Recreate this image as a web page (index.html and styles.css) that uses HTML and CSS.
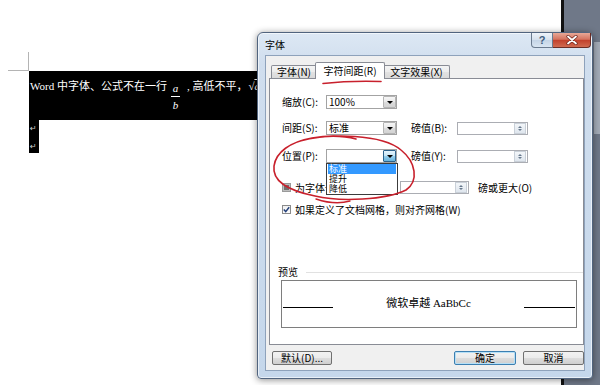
FILE: index.html
```html
<!DOCTYPE html>
<html lang="zh-CN">
<head>
<meta charset="utf-8">
<title>字体</title>
<link rel="stylesheet" href="styles.css">
</head>
<body>
<div class="screen">
  <div class="doc">
    <div class="crop"></div>
    <div class="band">
      <span class="txt">Word 中字体、公式不在一行</span>
      <span class="frac"><i>a</i><span class="bar"></span><i>b</i></span>
      <span class="txt comma">, 高低不平，</span>
      <span class="sqrt">√<i>a</i></span>
    </div>
    <div class="strip">
      <span class="ret">↵</span>
      <span class="ret">↵</span>
    </div>
  </div>
  <div class="edge"></div>
  <div class="desk"><div class="scroll"></div></div>

  <div class="dialog">
    <div class="titlebar">
      <span class="title">字体</span>
      <div class="caption">
        <span class="cbtn help">?</span>
        <span class="cbtn close">
          <svg width="14" height="10" viewBox="0 0 14 10"><path d="M3 1.5 L11 8.5 M11 1.5 L3 8.5" stroke="#6b2018" stroke-width="3.2" stroke-linecap="round"/><path d="M3 1.5 L11 8.5 M11 1.5 L3 8.5" stroke="#fff" stroke-width="1.8" stroke-linecap="round"/></svg>
        </span>
      </div>
    </div>
    <div class="client">
      <div class="tabs">
        <span class="tab t1">字体(N)</span>
        <span class="tab t2">字符间距(R)</span>
        <span class="tab t3">文字效果(X)</span>
      </div>
      <div class="panel">
        <div class="row r1">
          <span class="lbl">缩放(C):</span>
          <span class="combo"><span class="val">100%</span><span class="drop"><i class="tri"></i></span></span>
        </div>
        <div class="row r2">
          <span class="lbl">间距(S):</span>
          <span class="combo"><span class="val">标准</span><span class="drop"><i class="tri"></i></span></span>
          <span class="lbl lbl2">磅值(B):</span>
          <span class="spin"><span class="spinbtn"><i class="up"></i><i class="dn"></i></span></span>
        </div>
        <div class="row r3">
          <span class="lbl">位置(P):</span>
          <span class="combo"><span class="val"></span><span class="drop pressed"><i class="tri"></i></span></span>
          <span class="lbl lbl2">磅值(Y):</span>
          <span class="spin"><span class="spinbtn"><i class="up"></i><i class="dn"></i></span></span>
        </div>
        <div class="row r4">
          <span class="chk mixed"></span>
          <span class="clbl">为字体调整字间距(K):</span>
          <span class="spin short"><span class="spinbtn"><i class="up"></i><i class="dn"></i></span></span>
          <span class="unit">磅或更大(O)</span>
        </div>
        <div class="row r5">
          <span class="chk"><svg width="7" height="7" viewBox="0 0 7 7"><path d="M0.8 3.6 L2.7 5.6 L6.2 1.2" fill="none" stroke="#23407a" stroke-width="1.5"/></svg></span>
          <span class="clbl2">如果定义了文档网格，则对齐网格(W)</span>
        </div>
        <div class="prevhead"><span class="plbl">预览</span><span class="sep"></span></div>
        <div class="preview">
          <span class="pline"></span>
          <span class="ptext">微软卓越 AaBbCc</span>
          <span class="pline pr"></span>
        </div>
        <div class="droplist">
          <div class="item sel">标准</div>
          <div class="item">提升</div>
          <div class="item">降低</div>
        </div>
      </div>
      <div class="buttons">
        <span class="btn b-def">默认(D)...</span>
        <span class="btn b-ok">确定</span>
        <span class="btn b-cancel">取消</span>
      </div>
    </div>
  </div>

  <svg class="marks" width="600" height="385" viewBox="0 0 600 385">
    <path d="M323 83.5 Q350 80.5 381 81.5" fill="none" stroke="#c8202c" stroke-width="1.6" stroke-linecap="round"/>
    <path d="M300 141 C330 133 382 134 401 150 C416 162 419 181 406 190 C386 200 340 202 315 196 C290 191 272 182 274 166 C276 152 290 142 312 138 C330 135 345 136 356 139" fill="none" stroke="#c8202c" stroke-width="1.6" stroke-linecap="round"/>
    <path d="M316 199 C328 203 340 204 350 201" fill="none" stroke="#c8202c" stroke-width="1.4" stroke-linecap="round"/>
  </svg>
</div>
</body>
</html>
```

FILE: styles.css
```css
* { box-sizing: border-box; margin: 0; padding: 0; }
html, body { width: 600px; height: 385px; overflow: hidden; background: #fff; }
body { font-family: "Noto Sans CJK SC", "Liberation Sans", sans-serif; font-size: 10px; color: #000; }

.screen { position: relative; width: 600px; height: 385px; display: flex; overflow: hidden; }

/* document area */
.doc { width: 561px; flex: none; padding-top: 52px; }
.crop { margin-left: 8px; width: 21px; height: 19px; border-right: 1px solid #b4b4b4; border-bottom: 1px solid #b4b4b4; }
.band {
  margin-left: 29px; width: 240px; height: 49px; background: #000; color: #fff;
  display: flex; align-items: flex-start; padding: 8px 0 0 1px;
  font: 11px/14px "Liberation Serif", "Noto Sans CJK SC", serif; white-space: nowrap;
}
.frac { display: flex; flex-direction: column; align-items: center; width: 9px; margin: 3px 7px 0 4px; line-height: 12px; }
.frac i { font-style: italic; }
.bar { width: 9px; height: 1px; background: #fff; margin: 2px 0; }
.sqrt { margin-left: 1px; }
.sqrt i { font-style: italic; text-decoration: overline; }
.strip { margin-left: 29px; width: 10px; height: 33px; background: #000; display: flex; flex-direction: column; overflow: hidden; }
.ret { font: 8px/18px "DejaVu Sans", sans-serif; color: #cfcfcf; padding-left: 1px; }

.edge { width: 3px; flex: none; background: #111; }
.desk { flex: 1; background: #6f7888; display: flex; justify-content: flex-end; }
.scroll { width: 6px; height: 92px; margin-top: 42px; background: #a3abb7; }

/* dialog */
.dialog {
  position: absolute; left: 257px; top: 32px; width: 336px; height: 347px;
  border: 1px solid #51647e; border-radius: 6px 6px 4px 4px;
  background: linear-gradient(180deg, #dde8f4 0, #d0deee 30px, #c5d7eb 100%);
  box-shadow: 0 1px 7px rgba(0, 0, 0, .45), inset 0 0 0 1px rgba(255, 255, 255, .6);
  padding: 0 7px 7px 7px; display: flex; flex-direction: column; z-index: 2;
}
.titlebar { height: 22px; flex: none; display: flex; justify-content: space-between; align-items: flex-start; }
.title { font-size: 10px; line-height: 24px; }
.caption { display: flex; margin-right: -6px; }
.cbtn { height: 15px; display: flex; align-items: center; justify-content: center; }
.help {
  width: 22px; border: 1px solid #6a7a8e; border-top: none; border-radius: 0 0 0 4px;
  background: linear-gradient(#eef3f9, #d5e0ec 50%, #c4d4e6 51%, #d9e5f1);
  color: #3f5d7d; font: bold 11px/13px "Liberation Sans", sans-serif;
}
.close {
  width: 38px; border: 1px solid #6b2c24; border-left: none; border-top: none; border-radius: 0 0 4px 0;
  background: linear-gradient(#e8a897, #d4735f 45%, #c2412c 52%, #d06a50);
}

.client { flex: 1; background: #f0f0f0; border: 1px solid #8ea2bb; padding: 0 0 0 3px; display: flex; flex-direction: column; }

.tabs { display: flex; align-items: flex-end; height: 22px; flex: none; padding-left: 2px; }
.tab {
  height: 13px; border: 1px solid #898c95; border-bottom: none; border-radius: 2px 2px 0 0;
  background: linear-gradient(#f4f4f4, #ececec 50%, #e2e2e2 51%, #dadada);
  text-align: center; line-height: 12px; font-size: 10px; white-space: nowrap;
}
.t1 { width: 46px; }
.t2 { width: 70px; margin-left: -2px; height: 17px; background: #fff; position: relative; z-index: 2; margin-bottom: -1px; line-height: 15px; }
.t3 { width: 67px; margin-left: -2px; }

.panel { position: relative; z-index: 1; height: 267px; flex: none; background: #fff; border: 1px solid #898c95; padding: 16px 0 0 12px; }

.row { display: flex; align-items: center; height: 14px; white-space: nowrap; }
.r2 { margin-top: 12px; }
.r3 { margin-top: 14px; }
.r4 { margin-top: 18px; height: 13px; }
.r5 { margin-top: 9px; height: 13px; }
.lbl { width: 44px; line-height: 14px; }
.lbl2 { margin-left: 14px; width: 46px; }

.combo { width: 71px; height: 14px; border: 1px solid #a3a3a3; background: #fff; display: flex; align-items: center; padding-left: 2px; }
.combo .val { flex: 1; line-height: 12px; }
.drop {
  width: 13px; height: 12px; border: 1px solid #b4b4b4; border-radius: 1px;
  background: linear-gradient(#f6f6f6, #e9e9e9 50%, #dcdcdc 51%, #d3d3d3);
  display: flex; align-items: center; justify-content: center;
}
.drop.pressed { border-color: #2c628b; background: linear-gradient(#e5f4fc, #c4e5f6 50%, #98d1ef 51%, #68b3db); }
.tri { width: 0; height: 0; border-left: 3px solid transparent; border-right: 3px solid transparent; border-top: 3px solid #000; }

.spin { width: 71px; height: 13px; border: 1px solid #abadb3; background: #fff; display: flex; justify-content: flex-end; align-items: center; padding-right: 1px; }
.spin.short { width: 69px; }
.spinbtn {
  width: 12px; height: 11px; border: 1px solid #c9d0d8; background: linear-gradient(#f3f6f9, #dfe6ee);
  display: flex; flex-direction: column; align-items: center; justify-content: center; gap: 1px;
}
.up { width: 0; height: 0; border-left: 2px solid transparent; border-right: 2px solid transparent; border-bottom: 2px solid #66788c; }
.dn { width: 0; height: 0; border-left: 2px solid transparent; border-right: 2px solid transparent; border-top: 2px solid #66788c; }

.chk { width: 9px; height: 9px; border: 1px solid #8a8a8a; background: linear-gradient(#f0f0f0, #fbfbfb); display: flex; align-items: center; justify-content: center; }
.chk.mixed { background: #6f6f6f; border-color: #9a9a9a; box-shadow: inset 0 0 0 1px #bdbdbd; }
/* the open drop-down list lies over the rest of this label, as in the reference */
.clbl { margin-left: 4px; width: 105px; line-height: 13px; flex: none; overflow: hidden; }
.clbl2 { margin-left: 4px; line-height: 13px; }
.unit { margin-left: 9px; line-height: 13px; }

.prevhead { margin-top: 50px; margin-left: -4px; height: 12px; display: flex; align-items: center; }
.plbl { line-height: 12px; }
.sep { flex: 1; height: 1px; background: #e1e1e1; margin-left: 8px; }

.preview { margin-top: 2px; margin-left: -1px; width: 296px; height: 48px; border: 1px solid #7e7e7e; display: flex; align-items: flex-start; padding: 0 1px; }
.pline { width: 50px; height: 1px; background: #000; margin-top: 26px; flex: none; }
.pline.pr { width: 51px; }
.ptext { flex: 1; text-align: center; font: 11px/14px "Liberation Serif", "Noto Sans CJK SC", serif; margin-top: 15px; white-space: nowrap; }

.droplist { position: absolute; left: 56px; top: 84px; width: 72px; height: 32px; border: 1px solid #3c3c3c; background: #fff; padding: 0 1px; }
.item { height: 10px; line-height: 10px; font-family: "Liberation Sans", "Noto Sans CJK SC", sans-serif; font-size: 9px; padding-left: 1px; }
.item.sel { background: #3399ff; color: #fff; }

.buttons { display: flex; margin-top: 6px; height: 14px; flex: none; }
.btn {
  height: 14px; border: 1px solid #707070; border-radius: 2px;
  background: linear-gradient(#f2f2f2, #ebebeb 50%, #dddddd 51%, #cfcfcf);
  font-size: 10px; line-height: 12px; text-align: center; white-space: nowrap;
}
.b-def { width: 60px; margin-left: 3px; }
.b-ok { width: 62px; margin-left: auto; border-color: #3c7fb1; box-shadow: inset 0 0 0 1px #b6e0f7; }
.b-cancel { width: 61px; margin-left: 7px; }

.marks { position: absolute; left: 0; top: 0; z-index: 5; pointer-events: none; }
```
